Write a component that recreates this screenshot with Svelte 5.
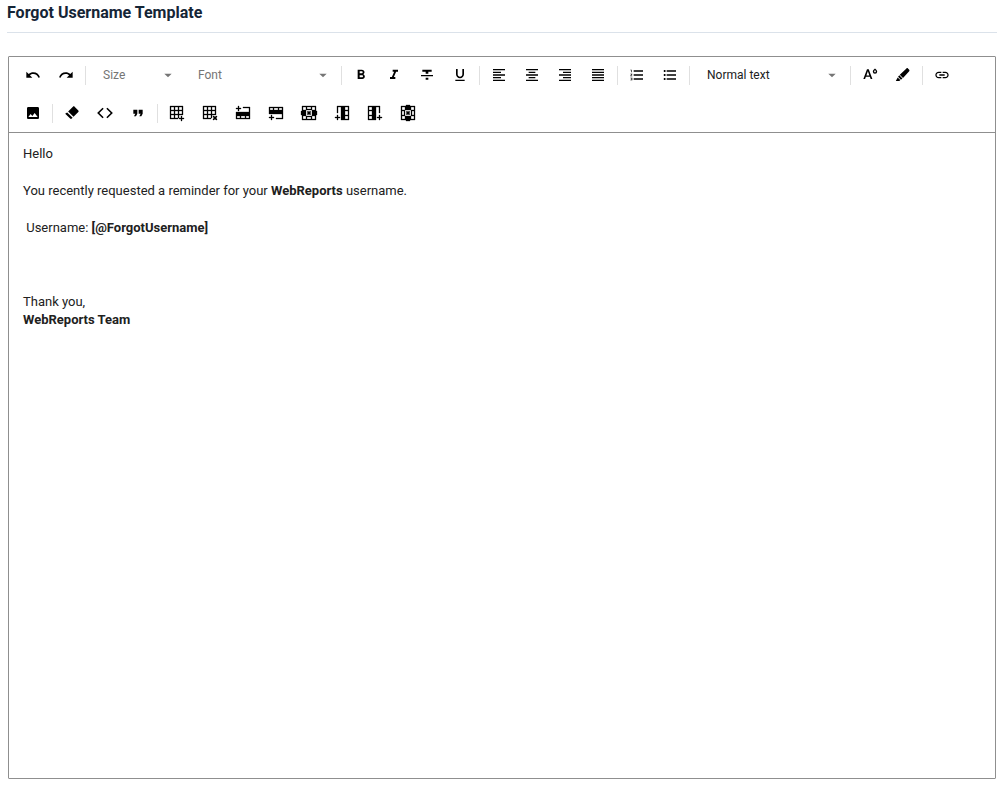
<script>
  const icons = {
    undo: 'M12.5 8c-2.65 0-5.05.99-6.9 2.6L2 7v9h9l-3.62-3.62c1.39-1.16 3.16-1.88 5.12-1.88 3.54 0 6.55 2.31 7.6 5.5l2.37-.78C21.08 11.03 17.15 8 12.5 8z',
    redo: 'M18.4 10.6C16.55 8.99 14.15 8 11.5 8c-4.65 0-8.58 3.03-9.96 7.22L3.9 16c1.05-3.19 4.05-5.5 7.6-5.5 1.95 0 3.73.72 5.12 1.88L13 16h9V7l-3.6 3.6z',
    bold: 'M15.6 10.79c.97-.67 1.65-1.77 1.65-2.79 0-2.26-1.75-4-4-4H7v14h7.04c2.09 0 3.71-1.7 3.71-3.79 0-1.52-.86-2.82-2.15-3.42zM10 6.5h3c.83 0 1.5.67 1.5 1.5s-.67 1.5-1.5 1.5h-3v-3zm3.5 9H10v-3h3.5c.83 0 1.5.67 1.5 1.5s-.67 1.5-1.5 1.5z',
    italic: 'M10 4v3h2.21l-3.42 8H6v3h8v-3h-2.21l3.42-8H18V4z',
    strike: 'M10 19h4v-3h-4v3zM5 4v3h5v3h4V7h5V4H5zM3 14h18v-2H3v2z',
    underline: 'M12 17c3.31 0 6-2.69 6-6V3h-2.5v8c0 1.93-1.57 3.5-3.5 3.5S8.5 12.93 8.5 11V3H6v8c0 3.31 2.69 6 6 6zm-7 2v2h14v-2H5z',
    alignLeft: 'M15 15H3v2h12v-2zm0-8H3v2h12V7zM3 13h18v-2H3v2zm0 8h18v-2H3v2zM3 3v2h18V3H3z',
    alignCenter: 'M7 15v2h10v-2H7zm-4 6h18v-2H3v2zm0-8h18v-2H3v2zm4-6v2h10V7H7zM3 3v2h18V3H3z',
    alignRight: 'M3 21h18v-2H3v2zm6-4h12v-2H9v2zm-6-4h18v-2H3v2zm6-4h12V7H9v2zM3 3v2h18V3H3z',
    alignJustify: 'M3 21h18v-2H3v2zm0-4h18v-2H3v2zm0-4h18v-2H3v2zm0-4h18V7H3v2zm0-6v2h18V3H3z',
    orderedList: 'M2 17h2v.5H3v1h1v.5H2v1h3v-4H2v1zm1-9h1V4H2v1h1v3zm-1 3h1.8L2 13.1v.9h3v-1H3.2L5 10.9V10H2v1zm5-6v2h14V5H7zm0 14h14v-2H7v2zm0-6h14v-2H7v2z',
    bulletList: 'M4 10.5c-.83 0-1.5.67-1.5 1.5s.67 1.5 1.5 1.5 1.5-.67 1.5-1.5-.67-1.5-1.5-1.5zm0-6c-.83 0-1.5.67-1.5 1.5S3.17 7.5 4 7.5 5.5 6.83 5.5 6 4.83 4.5 4 4.5zm0 12c-.83 0-1.5.68-1.5 1.5s.68 1.5 1.5 1.5 1.5-.68 1.5-1.5-.67-1.5-1.5-1.5zM7 19h14v-2H7v2zm0-6h14v-2H7v2zm0-8v2h14V5H7z',
    color: 'M7.5 3.5h2.6L15.6 18H13l-1.2-3.300H5.800L4.600 18H2zM8.800 6.500L6.600 12.600h4.400zM19.500 2.200c1.700 1.500 3.300 2.900 3.300 4.500a3.300 3.300 0 0 1-6.600 0c0-1.600 1.600-3 3.300-4.500zm0 3.100a1.300 1.300 0 1 0 .01 0z',
    background: 'M17.200 2.100c.7-.6 1.500-.6 2.200 0l1.900 1.900c.6.7.6 1.500 0 2.200L12 16.400 7.200 11.600zM6.400 12.400l4.800 4.800-2.300 1.800-4.300-4.300zM4 15.600l4 4L6.500 21H1.200z',
    link: 'M3.9 12c0-1.710 1.390-3.100 3.100-3.100h4V7H7c-2.760 0-5 2.240-5 5s2.240 5 5 5h4v-1.900H7c-1.710 0-3.100-1.390-3.100-3.100zM8 13h8v-2H8v2zm9-6h-4v1.900h4c1.710 0 3.100 1.390 3.100 3.100s-1.390 3.100-3.100 3.100h-4V17h4c2.760 0 5-2.240 5-5s-2.240-5-5-5z',
    image: 'M21 19V5c0-1.100-.9-2-2-2H5c-1.100 0-2 .9-2 2v14c0 1.100.9 2 2 2h14c1.100 0 2-.9 2-2zM8.500 13.500l2.500 3.010L14.500 12l4.500 6H5l3.500-4.500z',
    clear: 'M13.400 2.500c.8-.7 1.700-.7 2.500 0l5.600 5.600c.7.8.7 1.700 0 2.500L14.300 17.800 6.200 9.700zM4.800 11.100l8.100 8.100-1.200 1.200c-.8.700-1.700.700-2.500 0L2.600 13.800c-.7-.8-.7-.8 0-1.500z',
    code: 'M8.300 4L10 5.700 3.500 12l6.500 6.300L8.300 20 .2 12zM15.700 4L14 5.700l6.500 6.300-6.500 6.300 1.700 1.700 8.100-8z',
    quote: 'M6 17h3l2-4V7H5v6h3zm8 0h3l2-4V7h-6v6h3z'
  };

  // table icons use a 16px grid
  const grid = 'M1 1h13v9h-1V6H10v3h3v1H10v3h-1v1H1zM2 2v3h3V2zm4 0v3h3V2zm4 0v3h3V2zM2 6v3h3V6zm4 0v3h3V6zM2 10v3h3v-3zm4 0v3h3v-3z';
  const cross = 'M6 7l1-1 1 1 1-1 1 1-1 1 1 1-1 1-1-1-1 1-1-1 1-1z';
  const tableIcons = {
    table: grid + 'M12 11h1v2h2v1h-2v2h-1v-2h-2v-1h2z',
    tableDelete: grid + 'M11 11h1l1 1 1-1h1v1l-1 1 1 1v1h-1l-1-1-1 1h-1v-1l1-1-1-1z',
    rowAbove: 'M3 1h1v2h2v1H4v2H3V4H1V3h2zM8 2h7v12H1V7h13V3H8zM2 11v2h3v-2zm4 0v2h4v-2zm5 0v2h3v-2z',
    rowBelow: 'M1 2h14v12H8v-1h6V9H1zm1 1v2h3V3zm4 0v2h4V3zm5 0v2h3V3zM3 10h1v2h2v1H4v2H3v-2H1v-1h2z',
    rowDelete: 'M1 1h14v5h1v4h-1v5H1v-5H0V6h1zm1 1v3h3V2zm4 0v2h4V2zm5 0v3h3V2zM2 11v3h3v-3zm4 1v2h4v-2zm5-1v3h3v-3zM5 5v6h6V5z',
    columnLeft: 'M3 1h12v14H7V2H4v6H3zM11 2v3h3V2zm0 4v4h3V6zm0 5v3h3v-3zM3 10h1v2h2v1H4v2H3v-2H1v-1h2z',
    columnRight: 'M1 1h12v7h-1V2H9v13H1zM2 2v3h3V2zm0 4v4h3V6zm0 5v3h3v-3zM12 10h1v2h2v1h-2v2h-1v-2h-2v-1h2z',
    columnDelete: 'M1 1h5V0h4v1h5v14h-5v1H6v-1H1zm1 1v3h3V2zm0 4v4h2V6zm0 5v3h3v-3zM11 2v3h3V2zm1 4v4h2V6zm-1 5v3h3v-3zM5 5v6h6V5z'
  };
  tableIcons.rowDelete += cross;
  tableIcons.columnDelete += cross;

  const button = (icon, label) => ({ type: 'button', icon, label });
  const select = (label, options, placeholder = false) => ({ type: 'select', label, options, placeholder });
  const separator = { type: 'separator' };

  const items = [
    button('undo', 'Undo'),
    button('redo', 'Redo'),
    separator,
    select('Size', ['Size', '8pt', '10pt', '12pt', '14pt', '18pt'], true),
    select('Font', ['Font', 'Arial', 'Georgia', 'Tahoma', 'Verdana'], true),
    separator,
    button('bold', 'Bold'),
    button('italic', 'Italic'),
    button('strike', 'Strikethrough'),
    button('underline', 'Underline'),
    separator,
    button('alignLeft', 'Align left'),
    button('alignCenter', 'Align center'),
    button('alignRight', 'Align right'),
    button('alignJustify', 'Justify'),
    separator,
    button('orderedList', 'Ordered list'),
    button('bulletList', 'Bullet list'),
    separator,
    select('Header', ['Normal text', 'Heading 1', 'Heading 2', 'Heading 3']),
    separator,
    button('color', 'Font color'),
    button('background', 'Background color'),
    separator,
    button('link', 'Add link'),
    button('image', 'Add image'),
    separator,
    button('clear', 'Clear formatting'),
    button('code', 'Code block'),
    button('quote', 'Blockquote'),
    separator,
    button('table', 'Insert table'),
    button('tableDelete', 'Delete table'),
    button('rowAbove', 'Insert row above'),
    button('rowBelow', 'Insert row below'),
    button('rowDelete', 'Delete row'),
    button('columnLeft', 'Insert column left'),
    button('columnRight', 'Insert column right'),
    button('columnDelete', 'Delete column')
  ];
</script>

<main>
  <h1>Forgot Username Template</h1>

  <section class="editor">
    <div class="toolbar" role="toolbar" aria-label="Formatting">
      {#each items as item}
        {#if item.type === 'button'}
          <button type="button" class="tool" aria-label={item.label}>
            {#if tableIcons[item.icon]}
              <svg class="table-icon" viewBox="0 0 16 16"><path fill-rule="evenodd" d={tableIcons[item.icon]} /></svg>
            {:else}
              <svg viewBox="0 0 24 24"><path fill-rule="evenodd" d={icons[item.icon]} /></svg>
            {/if}
          </button>
        {:else if item.type === 'select'}
          <div class="picker" class:small={item.label === 'Size'}>
            <select aria-label={item.label} class:placeholder={item.placeholder}>
              {#each item.options as option}
                <option>{option}</option>
              {/each}
            </select>
            <svg class="arrow" viewBox="0 0 24 24"><path d="M6.500 10l5.500 5.500 5.500-5.500z" /></svg>
          </div>
        {:else}
          <span class="separator"></span>
        {/if}
      {/each}
    </div>

    <div class="content" contenteditable="true" role="textbox" tabindex="0" aria-multiline="true" aria-label="Template body">
      <p>Hello</p>
      <p>You recently requested a reminder for your <strong>WebReports</strong> username.</p>
      <p>&nbsp;Username: <strong>[@ForgotUsername]</strong></p>
      <p><br /></p>
      <p>Thank you,<br /><strong>WebReports Team</strong></p>
    </div>
  </section>
</main>

<style>
  :global(body) {
    margin: 0;
    background: #fff;
  }

  main {
    box-sizing: border-box;
    display: flex;
    flex-direction: column;
    gap: 23px;
    min-height: 100vh;
    padding: 0 8px 7px 7px;
    font-family: Roboto, sans-serif;
    color: #212121;
  }

  h1 {
    margin: 0;
    padding: 3px 0 9px;
    border-bottom: 1px solid #dbe2ea;
    font-size: 16px;
    line-height: 20px;
    font-weight: 700;
    color: #152536;
  }

  .editor {
    display: flex;
    flex-direction: column;
    flex: 1;
    margin-left: 1px;
    margin-right: 1px;
    border: 1px solid #8f8f8f;
    border-radius: 1px;
  }

  .toolbar {
    display: flex;
    flex-wrap: wrap;
    align-items: center;
    row-gap: 6px;
    padding: 2px 8px 3px;
    border-bottom: 1px solid #8f8f8f;
  }

  .tool {
    display: flex;
    padding: 8px 9px 8px 8px;
    border: 0;
    border-radius: 2px;
    background: none;
    cursor: pointer;
  }

  .tool:hover {
    background: #ececec;
  }

  svg {
    display: block;
    width: 16px;
    height: 16px;
    fill: #000;
  }

  .table-icon {
    overflow: visible;
    stroke: #000;
    stroke-width: 0.3;
  }

  .separator {
    width: 1px;
    height: 19px;
    margin: 0 3px 0 2px;
    background: #e0e0e0;
  }

  .picker {
    display: grid;
    align-items: center;
    width: 155px;
    height: 32px;
  }

  .picker.small {
    width: 95px;
  }

  .picker select,
  .arrow {
    grid-area: 1 / 1;
  }

  .picker select {
    appearance: none;
    width: 100%;
    height: 32px;
    padding: 0 24px 0 14px;
    border: 0;
    background: none;
    font-family: inherit;
    font-size: 12px;
    color: #212121;
  }

  .picker select.placeholder {
    color: #757575;
  }

  .arrow {
    justify-self: end;
    margin-right: 8px;
    fill: #757575;
    pointer-events: none;
  }

  .content {
    flex: 1;
    padding: 12px 14px;
    font-size: 13px;
    line-height: 18px;
    outline: none;
  }

  .content p {
    margin: 0 0 19px;
  }
</style>
